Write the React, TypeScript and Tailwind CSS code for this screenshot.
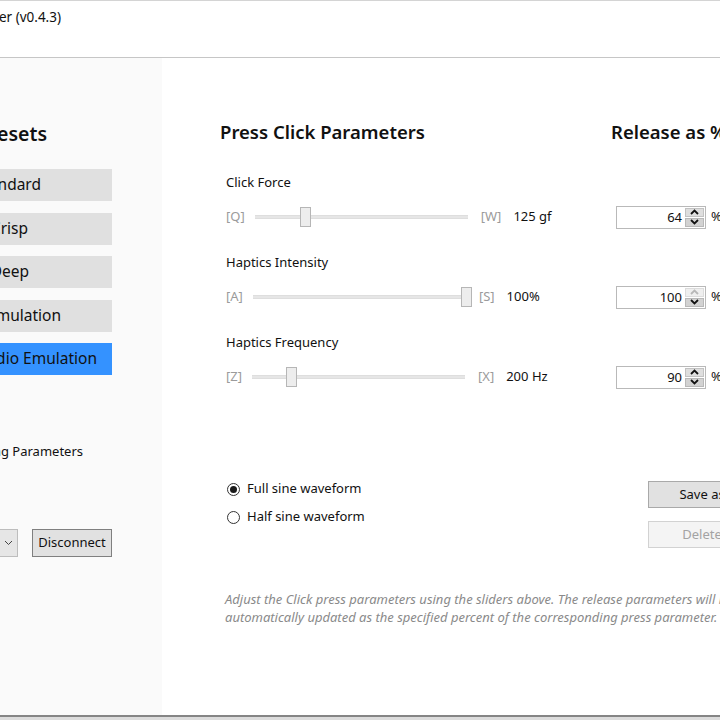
import React from "react";

const Chevron = ({ up, disabled }: { up?: boolean; disabled?: boolean }) => (
  <svg width="9" height="6" viewBox="0 0 9 6" className="block">
    <polyline
      points={up ? "1,5 4.5,1.5 8,5" : "1,1 4.5,4.5 8,1"}
      fill="none"
      stroke={disabled ? "#b8b8b8" : "#111"}
      strokeWidth="1.8"
    />
  </svg>
);

function Numeric({ value, upDisabled }: { value: string; upDisabled?: boolean }) {
  return (
    <div className="flex items-center">
      <div className="w-[90px] h-[23px] border border-[#b9b9b9] bg-white flex items-stretch">
        <div className="flex-1 text-right pr-[3px] text-[13px] leading-[21px] text-[#111]">{value}</div>
        <div className="w-[20px] flex flex-col py-[1px] pr-[1px] gap-[1px]">
          <div className={`flex-1 flex items-center justify-center border ${upDisabled ? "bg-[#efefef] border-[#dcdcdc]" : "bg-[#dedede] border-[#c2c2c2]"}`}>
            <Chevron up disabled={upDisabled} />
          </div>
          <div className="flex-1 flex items-center justify-center bg-[#d2d2d2] border border-[#b8b8b8]">
            <Chevron />
          </div>
        </div>
      </div>
      <span className="ml-[5px] text-[13px] text-[#111]">%</span>
    </div>
  );
}

function Slider({ lo, hi, value, thumb }: { lo: string; hi: string; value: string; thumb: number }) {
  return (
    <div className="flex items-center h-[24px] text-[13px]">
      <span className="text-[#9b9b9b] mr-[10px]">{lo}</span>
      <div className="relative w-[213px] h-[20px] flex items-center">
        <div className="w-full h-[4px] bg-[#e6e6e6] border-y border-[#dedede]" />
        <div
          className="absolute top-0 w-[11px] h-[20px] bg-[#ededed] border border-[#b6b6b6]"
          style={{ left: thumb }}
        />
      </div>
      <span className="text-[#9b9b9b] ml-[13px] mr-[12px]">{hi}</span>
      <span className="text-[#111]">{value}</span>
    </div>
  );
}

function Param({
  label,
  lo,
  hi,
  value,
  thumb,
  pct,
  upDisabled,
  first,
}: {
  label: string;
  lo: string;
  hi: string;
  value: string;
  thumb: number;
  pct: string;
  upDisabled?: boolean;
  first?: boolean;
}) {
  return (
    <div className={first ? "mt-[27px]" : "mt-[24px]"}>
      <div className="pl-[6px] h-[18px] leading-[18px] text-[13px] text-[#111]">{label}</div>
      <div className="flex mt-[14px]">
        <div className="w-[391px] pl-[6px]">
          <Slider lo={lo} hi={hi} value={value} thumb={thumb} />
        </div>
        <div className="pl-[5px] h-[24px] flex items-center">
          <Numeric value={pct} upDisabled={upDisabled} />
        </div>
      </div>
    </div>
  );
}

function PresetButton({ label, end, active, mt }: { label: string; end: string; active?: boolean; mt: string }) {
  return (
    <div
      className={`${mt} w-[112px] h-[32px] overflow-hidden flex items-center ${active ? "bg-[#3492ff]" : "bg-[#e0e0e0]"}`}
    >
      <div className={`${end} flex justify-end whitespace-nowrap text-[15.5px] text-[#111]`}>
        <span>{label}</span>
      </div>
    </div>
  );
}

export default function App() {
  return (
    <div className="w-[720px] h-[720px] overflow-hidden bg-white flex flex-col font-['Noto_Sans',sans-serif] text-[#111]">
      {/* title bar */}
      <div className="h-[58px] shrink-0 border-t border-[#d4d4d4] border-b border-b-[#c6c6c6] pt-[6px]">
        <div className="w-[61px] flex justify-end whitespace-nowrap text-[13.5px] leading-[20px]">
          <span>Haptics Customiser (v0.4.3)</span>
        </div>
      </div>

      <div className="flex-1 flex min-h-0">
        {/* left panel */}
        <div className="w-[162px] shrink-0 bg-[#fafafa] flex flex-col pt-[62px]">
          <div className="w-[47px] flex justify-end whitespace-nowrap text-[19.5px] font-semibold leading-[28px]">
            <span>Presets</span>
          </div>
          <PresetButton label="Standard" end="w-[41px]" mt="mt-[21px]" />
          <PresetButton label="Crisp" end="w-[28px]" mt="mt-[12px]" />
          <PresetButton label="Deep" end="w-[29px]" mt="mt-[11px]" />
          <PresetButton label="Emulation" end="w-[61px]" mt="mt-[12px]" />
          <PresetButton label="Audio Emulation" end="w-[97px]" mt="mt-[11px]" active />
          <div className="mt-[67px] w-[83px] flex justify-end whitespace-nowrap text-[13px] leading-[18px]">
            <span>Show Tuning Parameters</span>
          </div>
          <div className="mt-[69px] flex items-center">
            <div className="-ml-[82px] w-[100px] h-[28px] border border-[#bdbdbd] bg-[#e6e6e6] flex items-center justify-end pr-[4px] text-[13px]">
              <svg width="9" height="6" viewBox="0 0 9 6">
                <polyline points="1,1 4.5,4.5 8,1" fill="none" stroke="#444" strokeWidth="1" />
              </svg>
            </div>
            <button className="ml-[14px] w-[80px] h-[28px] border border-[#7f7f7f] bg-[#e1e1e1] text-[13px] text-[#111] flex items-center justify-center">
              Disconnect
            </button>
          </div>
        </div>

        {/* main */}
        <div className="flex-1 pl-[58px] pt-[60px] flex flex-col">
          <div className="flex h-[28px] items-center whitespace-nowrap">
            <div className="w-[391px] text-[18.5px] font-semibold">Press Click Parameters</div>
            <div className="text-[18.5px] font-semibold">Release as % of Press</div>
          </div>

          <Param first label="Click Force" lo="[Q]" hi="[W]" value="125 gf" thumb={45} pct="64" />
          <Param label="Haptics Intensity" lo="[A]" hi="[S]" value="100%" thumb={208} pct="100" upDisabled />
          <Param label="Haptics Frequency" lo="[Z]" hi="[X]" value="200 Hz" thumb={34} pct="90" />

          <div className="mt-[90px] flex">
            <div className="w-[428px] pl-[7px] flex flex-col gap-[8px] text-[13px]">
              <div className="h-[20px] flex items-center">
                <div className="w-[13px] h-[13px] rounded-full border border-[#333] flex items-center justify-center">
                  <div className="w-[7px] h-[7px] rounded-full bg-[#1a1a1a]" />
                </div>
                <span className="ml-[7px]">Full sine waveform</span>
              </div>
              <div className="h-[20px] flex items-center">
                <div className="w-[13px] h-[13px] rounded-full border border-[#333]" />
                <span className="ml-[7px]">Half sine waveform</span>
              </div>
            </div>
            <div className="pt-[2px] flex flex-col gap-[13px] whitespace-nowrap">
              <button className="w-[150px] h-[27px] border border-[#a9a9a9] bg-[#e1e1e1] text-[13px] text-[#111] flex items-center justify-center">
                Save as Preset
              </button>
              <button className="w-[150px] h-[27px] border border-[#d2d2d2] bg-[#f4f4f4] text-[13px] text-[#a3a3a3] flex items-center justify-center">
                Delete Preset
              </button>
            </div>
          </div>

          <div className="mt-[42px] pl-[5px] text-[13px] italic text-[#8a8a8a] leading-[18px] whitespace-nowrap">
            Adjust the Click press parameters using the sliders above. The release parameters will be
            <br />
            automatically updated as the specified percent of the corresponding press parameter.
          </div>
        </div>
      </div>

      <div className="h-[5px] shrink-0 border-t-2 border-[#858585] bg-[#dcdcdc]" />
    </div>
  );
}
